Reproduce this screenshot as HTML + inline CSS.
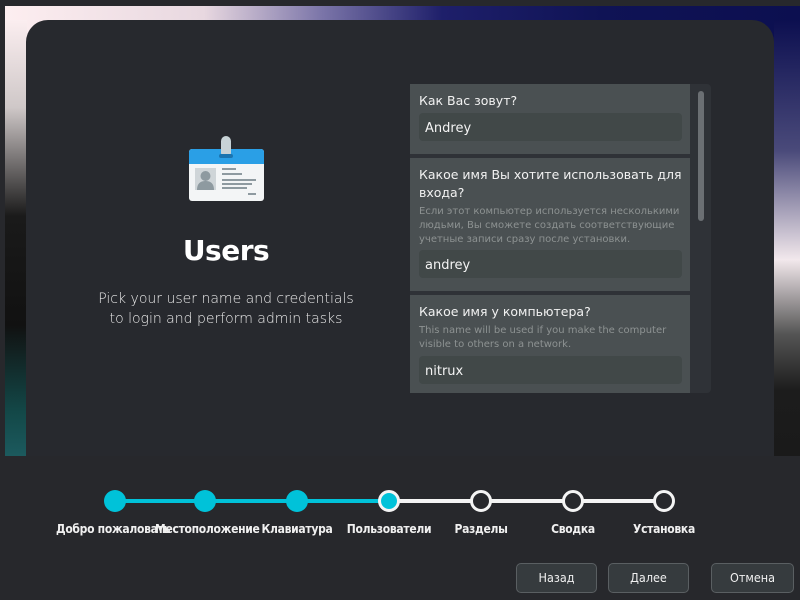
<!DOCTYPE html>
<html><head><meta charset="utf-8"><style>
*{margin:0;padding:0;box-sizing:border-box}
body{width:800px;height:600px;background:#27282c;position:relative;overflow:hidden;font-family:"Liberation Sans","DejaVu Sans",sans-serif;color:#fff}
.wp{position:absolute;left:5px;top:6px;width:795px;height:450px;background:linear-gradient(90deg,#fdeef0 0%,#e8d8e0 25%,#7a74a8 40%,#1e1f6a 55%,#0f1355 75%,#0c0f50 100%)}
.wpl{position:absolute;left:5px;top:20px;width:22px;height:436px;background:linear-gradient(180deg,#fbeef0 0%,#cfc8c8 20%,#1a1a1a 45%,#111 70%,#134848 90%,#1c5a5e 100%)}
.wpr{position:absolute;left:774px;top:20px;width:26px;height:436px;background:linear-gradient(180deg,#0c0f50 0%,#4a4a7a 30%,#f2e8ec 55%,#555 72%,#1c1c1c 85%,#1a1a1a 100%)}
.card{position:absolute;left:26px;top:20px;width:748px;height:440px;background:#27292e;border-radius:22px 22px 0 0}
.bot{position:absolute;left:0;top:456px;width:800px;height:144px;background:#27282c}
h1{position:absolute;left:126px;top:234px;width:200px;text-align:center;font-size:28px;font-weight:bold;font-family:"DejaVu Sans",sans-serif;letter-spacing:-0.5px}
.sub{position:absolute;left:66px;top:289px;width:320px;text-align:center;font-size:14px;line-height:20px;color:#e8e8e8;font-family:"DejaVu Sans",sans-serif;font-weight:300}
.panel{position:absolute;left:410px;top:84px;width:301px;height:309px;background:#2f3237;border-radius:0 4px 4px 0;overflow:hidden}
.sec{position:absolute;left:0;width:280px;background:#4a5052}
.lab{position:absolute;left:9px;font-size:12.5px;color:#f2f2f2;font-family:"DejaVu Sans",sans-serif;line-height:18px}
.hint{position:absolute;left:9px;font-size:10px;color:#8d9292;line-height:14px;font-family:"DejaVu Sans",sans-serif}
.inp{position:absolute;left:9px;width:263px;height:28px;background:#414848;border-radius:4px;font-size:13px;padding:8px 0 0 6px;font-family:"DejaVu Sans",sans-serif;color:#f4f4f4}
.thumb{position:absolute;left:288px;top:7px;width:6px;height:130px;background:#6b6f73;border-radius:3px}
.dot{position:absolute;width:22px;height:22px;border-radius:50%;top:490px}
.f{background:#00c2d9}
.o{background:#27282c;border:3px solid #f4f4f4}
.line{position:absolute;height:4px;top:499px}
.st{position:absolute;top:522px;font-size:12px;font-weight:bold;font-family:"DejaVu Sans Condensed","DejaVu Sans",sans-serif;color:#f0f0f0;text-align:center;width:100px;letter-spacing:-0.3px}
.btn{position:absolute;top:563px;height:30px;background:#363b3e;border:1px solid #5a5f62;border-radius:5px;font-size:12.5px;text-align:center;line-height:28px;color:#f0f0f0;font-family:"DejaVu Sans Condensed","DejaVu Sans",sans-serif}
</style></head><body>
<div class="wp"></div><div class="wpl"></div><div class="wpr"></div>
<div class="card"></div><div class="bot"></div>
<svg style="position:absolute;left:188px;top:136px" width="78" height="66" viewBox="0 0 78 66">
<rect x="1" y="13" width="75" height="52" rx="3" fill="#f3f5f6"/>
<path d="M1 16a3 3 0 0 1 3-3h69a3 3 0 0 1 3 3v12H1z" fill="#2a9fe6"/>
<rect x="33" y="0" width="10" height="22" rx="5" fill="#c7d2d6"/>
<rect x="31" y="18" width="14" height="4" rx="2" fill="#1a74b0"/>
<rect x="7" y="32" width="21" height="22" fill="#cfd5d8"/>
<circle cx="17.5" cy="40" r="5" fill="#8e9aa0"/>
<path d="M9 54c0-7 4-9 8.5-9s8.5 2 8.5 9z" fill="#8e9aa0"/>
<rect x="34" y="32" width="14" height="2" fill="#8e9aa0"/><rect x="34" y="37" width="20" height="2" fill="#8e9aa0"/>
<rect x="34" y="43" width="34" height="2" fill="#8e9aa0"/><rect x="34" y="47" width="30" height="2" fill="#8e9aa0"/><rect x="34" y="51" width="25" height="2" fill="#8e9aa0"/>
<rect x="60" y="57" width="8" height="2" fill="#8e9aa0"/>
</svg>
<h1>Users</h1>
<div class="sub">Pick your user name and credentials<br>to login and perform admin tasks</div>
<div class="panel">
<div class="sec" style="top:0;height:70px"><div class="lab" style="top:8px">Как Вас зовут?</div><div class="inp" style="top:29px">Andrey</div></div>
<div class="sec" style="top:74px;height:133px"><div class="lab" style="top:8px">Какое имя Вы хотите использовать для<br>входа?</div><div class="hint" style="top:47px">Если этот компьютер используется несколькими<br>людьми, Вы сможете создать соответствующие<br>учетные записи сразу после установки.</div><div class="inp" style="top:92px">andrey</div></div>
<div class="sec" style="top:211px;height:98px"><div class="lab" style="top:8px">Какое имя у компьютера?</div><div class="hint" style="top:29px">This name will be used if you make the computer<br>visible to others on a network.</div><div class="inp" style="top:61px">nitrux</div></div>
<div class="thumb"></div>
</div>
<div class="line" style="left:115px;width:275px;background:#00c2d9"></div>
<div class="line" style="left:390px;width:275px;background:#f4f4f4"></div>
<div class="dot f" style="left:104px"></div><div class="dot f" style="left:194px"></div><div class="dot f" style="left:286px"></div>
<div class="dot f" style="left:378px;border:3px solid #f4f4f4"></div>
<div class="dot o" style="left:470px"></div><div class="dot o" style="left:562px"></div><div class="dot o" style="left:653px"></div>
<div class="st" style="left:56px;width:120px;text-align:left">Добро пожаловать</div>
<div class="st" style="left:155px;background:transparent">Местоположение</div>
<div class="st" style="left:247px">Клавиатура</div>
<div class="st" style="left:339px">Пользователи</div>
<div class="st" style="left:431px">Разделы</div>
<div class="st" style="left:523px">Сводка</div>
<div class="st" style="left:614px">Установка</div>
<div class="btn" style="left:516px;width:81px">Назад</div>
<div class="btn" style="left:608px;width:81px">Далее</div>
<div class="btn" style="left:711px;width:83px">Отмена</div>
</body></html>
